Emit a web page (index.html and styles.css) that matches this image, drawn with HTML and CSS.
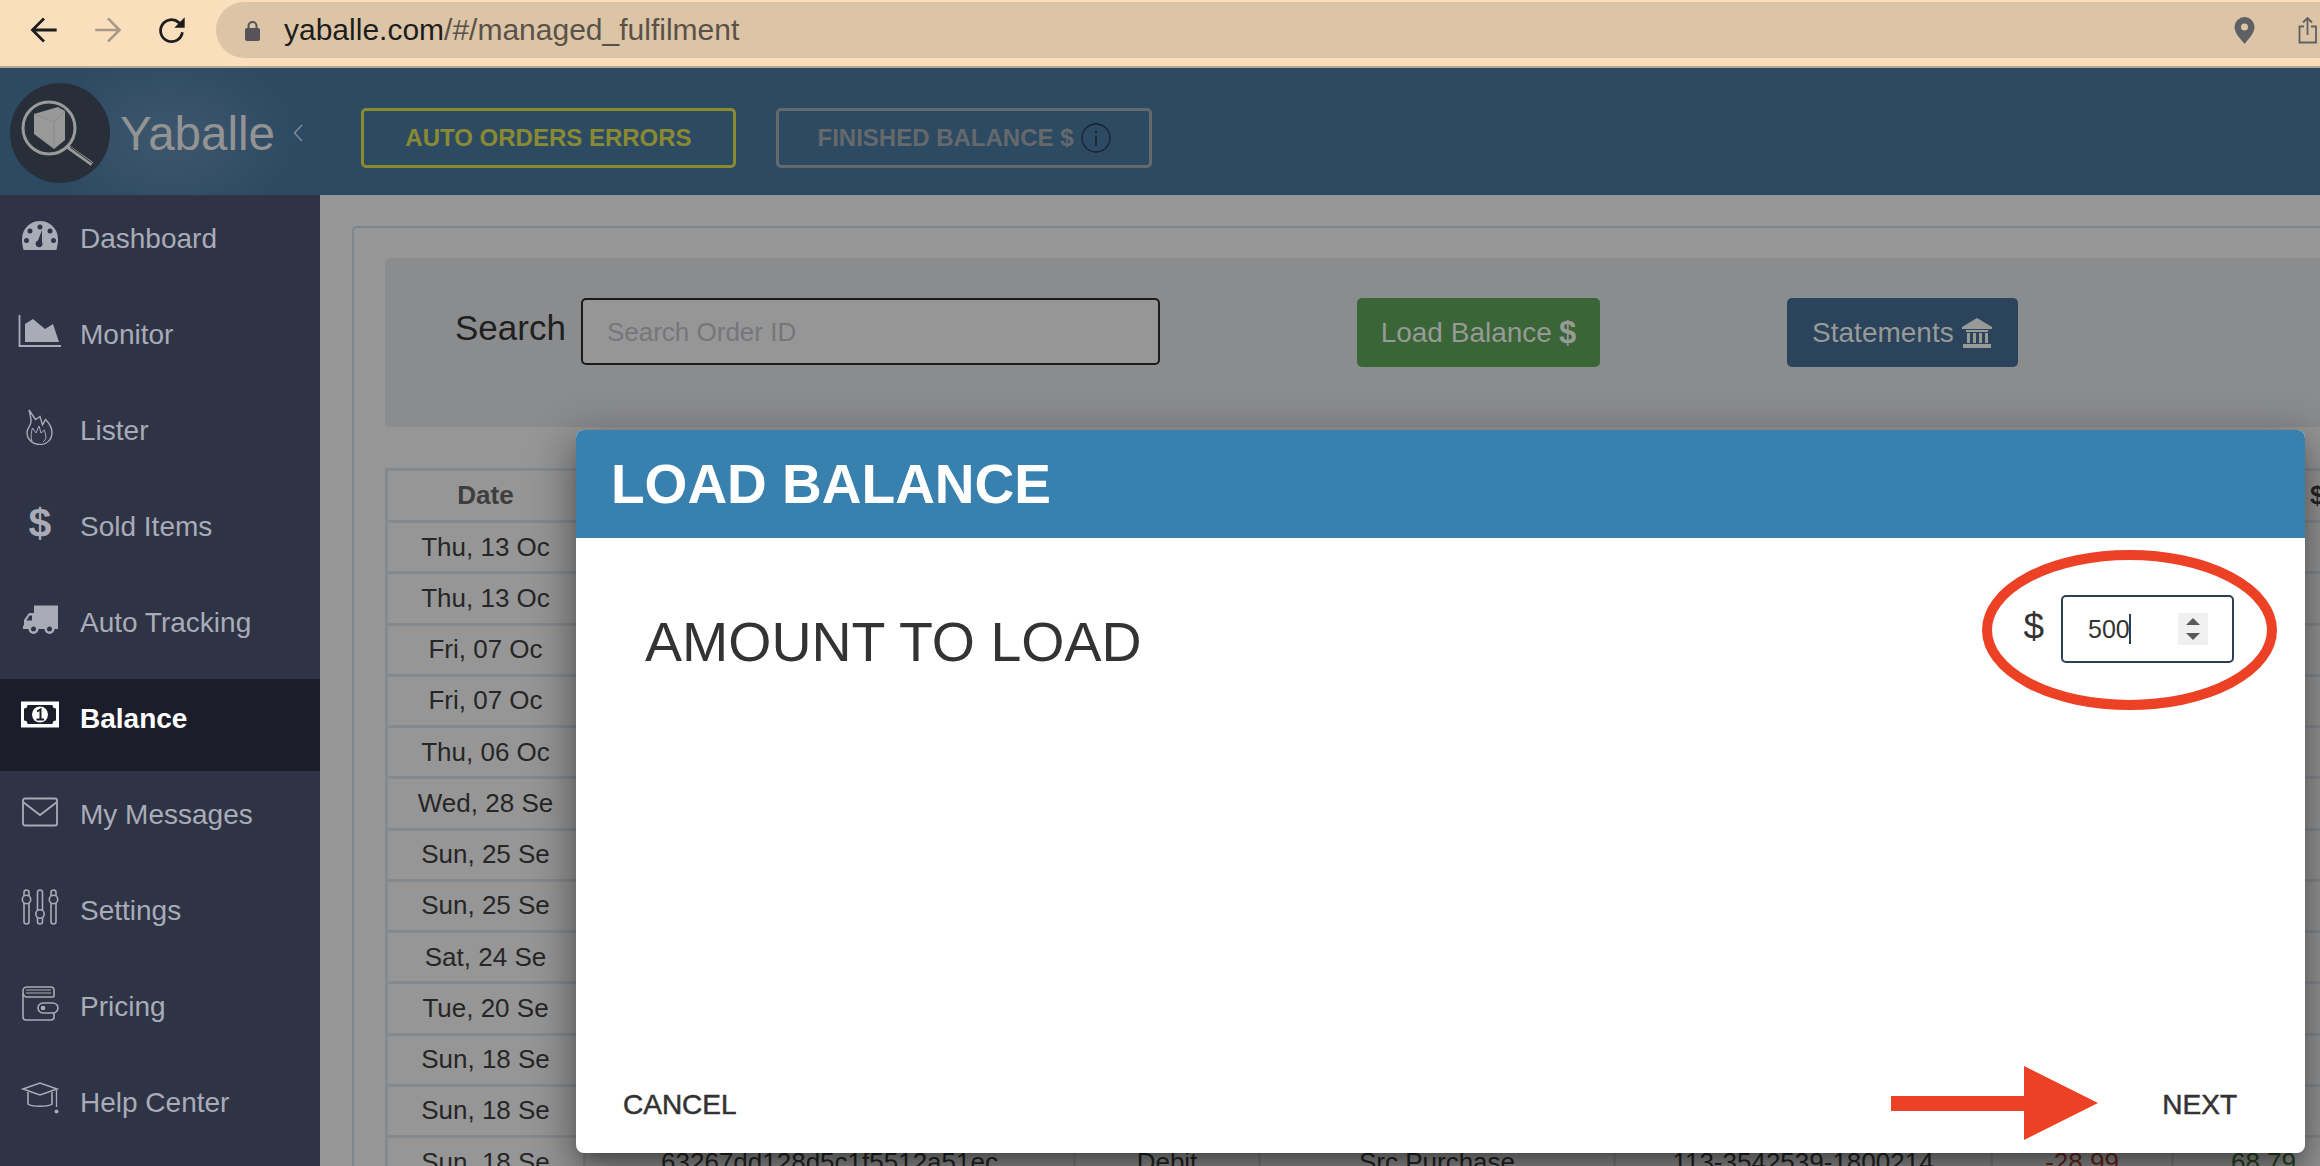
FILE: index.html
```html
<!DOCTYPE html>
<html lang="en">
<head>
<meta charset="utf-8">
<title>Yaballe</title>
<link rel="stylesheet" href="styles.css">
</head>
<body>
<div class="browser">
  <div class="nav-group">
    <svg class="nav-icon" viewBox="0 0 26 26"><path d="M24 13H4M13 3L3 13l10 10" fill="none" stroke="#1d1d1d" stroke-width="2.400"/></svg>
    <svg class="nav-icon" viewBox="0 0 26 26"><path d="M2 13h20M13 3l10 10-10 10" fill="none" stroke="#a8998a" stroke-width="2.200"/></svg>
    <svg class="nav-icon" viewBox="0 0 26 26"><path d="M22 15a9.500 9.500 0 1 1-3-8.400L22 9.500" fill="none" stroke="#1d1d1d" stroke-width="2.400"/><path d="M24 2v9h-9z" fill="#1d1d1d"/></svg>
  </div>
  <div class="address">
    <svg class="lock" viewBox="0 0 17 21"><path d="M4.500 9V6a4 4 0 0 1 8 0v3" fill="none" stroke="#55525a" stroke-width="2"/><rect x="1" y="8" width="15" height="13" rx="2" fill="#55525a"/></svg>
    <span class="url"><span class="url-host">yaballe.com</span>/#/managed_fulfilment</span>
    <svg class="pin" viewBox="0 0 21 27"><path fill-rule="evenodd" d="M10.500 0a10 10 0 0 1 10 10c0 6-6 12-10 17C6.500 22 .5 16 .5 10a10 10 0 0 1 10-10zm0 6.500a3.500 3.500 0 1 0 0 7 3.500 3.500 0 0 0 0-7z" fill="#5f6064"/></svg>
    <svg class="share" viewBox="0 0 21 27"><path d="M10.500 18V1M6 5.500L10.500 1 15 5.500M7 9.500H2.500v16h16.500v-16H14" fill="none" stroke="#5f6064" stroke-width="1.800"/></svg>
  </div>
</div>
<header class="topbar">
  <div class="brand">
    <svg class="logo" viewBox="0 0 100 100"><circle cx="50" cy="50" r="50" fill="#282f39"/><path d="M24 31l24-7 7 4v29l-11 9-20-15z" fill="#999"/><path d="M24 31l20 8 11-11M44 39v27" fill="none" stroke="#8a8a8a" stroke-width="1"/><circle cx="39" cy="45" r="26" fill="none" stroke="#9b9b9b" stroke-width="3"/><path d="M58 64l24 17" stroke="#9b9b9b" stroke-width="4"/><path d="M60 64l22 16" stroke="#282f39" stroke-width="1"/></svg>
    <span class="brand-name">Yaballe</span>
    <svg class="chev" viewBox="0 0 10 18"><path d="M9 1L1.500 9 9 17" fill="none" stroke="#7d8a96" stroke-width="1.600"/></svg>
  </div>
  <button class="top-btn top-btn-warn">AUTO ORDERS ERRORS</button>
  <button class="top-btn top-btn-muted">FINISHED BALANCE $ <svg class="info" viewBox="0 0 30 30"><circle cx="15" cy="15" r="14" fill="none" stroke="#16212c" stroke-width="1.300"/><path d="M15 12.500V23M15 7.500v2.500" stroke="#16212c" stroke-width="1.500"/></svg></button>
</header>
<div class="workspace">
  <nav class="sidebar">
    <a class="nav-item"><svg class="ni" viewBox="0 0 44 36"><path fill-rule="evenodd" d="M22 4a18 18 0 0 1 18 18c0 4-.7 8-1.500 11h-33C4.700 30 4 26 4 22A18 18 0 0 1 22 4zm0 3.500a2.500 2.500 0 1 0 0 5 2.500 2.500 0 0 0 0-5zM12 11.500a2.500 2.500 0 1 0 0 5 2.500 2.500 0 0 0 0-5zm20 0a2.500 2.500 0 1 0 0 5 2.500 2.500 0 0 0 0-5zM8.500 21a2.500 2.500 0 1 0 0 5 2.500 2.500 0 0 0 0-5zm27 0a2.500 2.500 0 1 0 0 5 2.500 2.500 0 0 0 0-5zM24 13l-4 10.500a3.500 3.500 0 1 0 3.800 5.500c1-1 1-2.500.2-3.500z" fill="currentColor"/></svg><span>Dashboard</span></a>
    <a class="nav-item"><svg class="ni" viewBox="0 0 44 36"><path d="M1.500 2v31H43" fill="none" stroke="currentColor" stroke-width="1.800"/><path d="M7 29V11l8-5 12 10 8-5 6 18z" fill="currentColor"/></svg><span>Monitor</span></a>
    <a class="nav-item"><svg class="ni" viewBox="0 0 44 36"><path d="M11 1l6.500 9.500L22 7.500l2.500 8.500 3-5.500c4 4 6.500 8.500 6.500 13 0 7-5 12-12 12S9 30.500 9 23.500c0-4 3.500-6.500 4-10.500.3-3.500-1-8-2-12z" fill="none" stroke="currentColor" stroke-width="1.400"/><path d="M14 32c-1.500-3.500-1-9 .5-13l3.500 5 3-7 2 7 3.500-3 1.500 7c0 2-1.500 4-3 5" fill="none" stroke="currentColor" stroke-width="1"/></svg><span>Lister</span></a>
    <a class="nav-item"><span class="ni ni-dollar">$</span><span>Sold Items</span></a>
    <a class="nav-item"><svg class="ni" viewBox="0 0 44 36"><path fill-rule="evenodd" d="M16 4.500h24V28h-3.500a5 5 0 0 1-10 0h-6a5 5 0 0 1-10 0H5v-3l1-1v-5l5-7h5zM14 14.500h-2.500l-3 5H14zM15.500 25.500a2.500 2.500 0 1 0 0 5 2.500 2.500 0 0 0 0-5zm16 0a2.500 2.500 0 1 0 0 5 2.500 2.500 0 0 0 0-5z" fill="currentColor"/></svg><span>Auto Tracking</span></a>
    <a class="nav-item active"><svg class="ni" viewBox="0 0 44 36"><path fill-rule="evenodd" d="M3 4.500h38v26H3zM9.500 8c0 2.500-1.500 3.500-3.500 3.500v12c2 0 3.500 1 3.500 3.500h25c0-2.500 1.500-3.500 3.500-3.500v-12c-2 0-3.500-1-3.500-3.500z" fill="currentColor"/><circle cx="22" cy="17.500" r="8" fill="currentColor"/><path d="M19 14.500l3.500-2v10M18.500 22.500h7.500" fill="none" stroke="#1b1d2a" stroke-width="2"/></svg><span>Balance</span></a>
    <a class="nav-item"><svg class="ni" viewBox="0 0 44 36"><rect x="5" y="5.500" width="34" height="27" rx="2" fill="none" stroke="currentColor" stroke-width="1.800"/><path d="M5 9l17 13L39 9" fill="none" stroke="currentColor" stroke-width="1.800"/></svg><span>My Messages</span></a>
    <a class="nav-item"><svg class="ni" viewBox="0 0 44 36" fill="none" stroke="currentColor" stroke-width="1.600"><rect x="6" y="1" width="5" height="34" rx="2.500"/><rect x="19.500" y="1" width="5" height="34" rx="2.500"/><rect x="33" y="1" width="5" height="34" rx="2.500"/><circle cx="8.500" cy="10.500" r="4.200" fill="#2e3346"/><circle cx="22" cy="25" r="4.200" fill="#2e3346"/><circle cx="35.500" cy="10.500" r="4.200" fill="#2e3346"/></svg><span>Settings</span></a>
    <a class="nav-item"><svg class="ni" viewBox="0 0 44 36" fill="none" stroke="currentColor" stroke-width="1.600"><path d="M5 6a4 4 0 0 1 4-4h24a3 3 0 0 1 3 3v7M5 6v26a3 3 0 0 0 3 3h25a3 3 0 0 0 3-3v-4M5 7c0 3 2 5 4 5h27"/><path d="M8 5h25M8 8h25" stroke-width="1"/><rect x="20" y="18" width="20" height="10" rx="5"/><circle cx="25" cy="23" r="1.500" fill="currentColor"/></svg><span>Pricing</span></a>
    <a class="nav-item"><svg class="ni" viewBox="0 0 44 36" fill="none" stroke="currentColor" stroke-width="1.600"><path d="M5 8l17-6 17 6-17 6z"/><path d="M10 11v12c3 3 21 3 24 0V11"/><path d="M38.500 9v17" stroke-width="1.300"/><circle cx="38.500" cy="30.500" r="2" fill="currentColor" stroke="none"/></svg><span>Help Center</span></a>
  </nav>
  <main class="content">
    <section class="panel">
      <div class="search-band">
        <label class="search-label">Search</label>
        <div class="search-input">Search Order ID</div>
        <button class="action action-green">Load Balance <b class="action-sign">$</b></button>
        <button class="action action-blue">Statements <svg class="bank" viewBox="0 0 32 30"><path d="M16 0l15 9v2H1V9z" fill="currentColor"/><path d="M2 26h28v4H2zM5 12h22v2H5zM6 15h3v10H6zM12 15h3v10h-3zM18 15h3v10h-3zM24 15h3v10h-3z" fill="currentColor"/></svg></button>
      </div>
      <table class="orders">
        <thead><tr><th class="c-date">Date</th><th class="c-id"></th><th class="c-type"></th><th class="c-desc"></th><th class="c-order"></th><th class="c-amt"></th><th class="c-bal">$</th></tr></thead>
        <tbody>
          <tr><td>Thu, 13 Oc</td><td></td><td></td><td></td><td></td><td></td><td></td></tr>
          <tr><td>Thu, 13 Oc</td><td></td><td></td><td></td><td></td><td></td><td></td></tr>
          <tr><td>Fri, 07 Oc</td><td></td><td></td><td></td><td></td><td></td><td></td></tr>
          <tr><td>Fri, 07 Oc</td><td></td><td></td><td></td><td></td><td></td><td></td></tr>
          <tr><td>Thu, 06 Oc</td><td></td><td></td><td></td><td></td><td></td><td></td></tr>
          <tr><td>Wed, 28 Se</td><td></td><td></td><td></td><td></td><td></td><td></td></tr>
          <tr><td>Sun, 25 Se</td><td></td><td></td><td></td><td></td><td></td><td></td></tr>
          <tr><td>Sun, 25 Se</td><td></td><td></td><td></td><td></td><td></td><td></td></tr>
          <tr><td>Sat, 24 Se</td><td></td><td></td><td></td><td></td><td></td><td></td></tr>
          <tr><td>Tue, 20 Se</td><td></td><td></td><td></td><td></td><td></td><td></td></tr>
          <tr><td>Sun, 18 Se</td><td></td><td></td><td></td><td></td><td></td><td></td></tr>
          <tr><td>Sun, 18 Se</td><td></td><td></td><td></td><td></td><td></td><td></td></tr>
          <tr><td>Sun, 18 Se</td><td>63267dd128d5c1f5512a51ec</td><td>Debit</td><td>Src Purchase</td><td>113-3542539-1800214</td><td class="neg">-28.99</td><td class="pos">68.79</td></tr>
        </tbody>
      </table>
    </section>
  </main>
</div>
<div class="modal">
  <div class="modal-head">LOAD BALANCE</div>
  <div class="modal-body">
    <h2 class="amount-title">AMOUNT TO LOAD</h2>
    <div class="amount-field">
      <span class="amount-sign">$</span>
      <div class="amount-input"><span class="amount-value">500</span><span class="spinner"><i class="spin-up"></i><i class="spin-down"></i></span></div>
    </div>
  </div>
  <div class="modal-foot"><button class="foot-btn">CANCEL</button><button class="foot-btn">NEXT</button></div>
</div>
<svg class="annotation" viewBox="0 0 2320 1166">
  <ellipse cx="2129.500" cy="630" rx="142.500" ry="75" fill="none" stroke="#ec4125" stroke-width="10"/>
  <rect x="1891" y="1096" width="134" height="15" fill="#ec4125"/>
  <path d="M2024 1066l74 37-74 37z" fill="#ec4125"/>
</svg>
</body>
</html>
```

FILE: styles.css
```css
* { box-sizing: border-box; }
html, body { margin: 0; height: 1166px; overflow: hidden; }
body { position: relative; width: 2320px; background: #969696; font-family: "Liberation Sans", Arial, sans-serif; color: #333; }
button { font-family: inherit; }

.browser { height: 68px; background: #fbdfbc; border-bottom: 2px solid #b8a68e; display: flex; align-items: center; padding: 0 0 6px 29px; }
.nav-group { display: flex; gap: 34px; flex: none; }
.nav-icon { width: 30px; height: 30px; flex: none; }
.address { flex: 1; height: 56px; margin-left: 29px; background: #dcc5a6; border-radius: 28px 0 0 28px; display: flex; align-items: center; padding: 0 2px 0 28px; }
.lock { width: 17px; height: 21px; flex: none; }
.url { font-size: 30px; color: #5a5148; margin-left: 23px; flex: 1; }
.url-host { color: #1d1d1d; }
.pin { width: 21px; height: 27px; flex: none; margin-right: 42px; }
.share { width: 21px; height: 27px; flex: none; }

.topbar { height: 127px; background: #2d4a63; display: flex; align-items: center; }
.brand { width: 361px; height: 127px; display: flex; align-items: center; padding: 3px 0 0 10px; background: radial-gradient(ellipse 130px 90px at 170px 70px, #3d566d, #2d4a63); flex: none; }
.logo { width: 100px; height: 100px; flex: none; }
.brand-name { font-size: 47.500px; color: #939393; margin-left: 10px; }
.chev { width: 10px; height: 18px; margin-left: 18px; }
.top-btn { height: 60px; margin-top: 13px; border-radius: 5px; background: transparent; font-size: 24px; font-weight: 700; padding: 0; display: flex; align-items: center; justify-content: center; gap: 7px; }
.top-btn-warn { width: 375px; border: 3px solid #8a8a33; color: #8a8a33; }
.top-btn-muted { width: 376px; margin-left: 40px; border: 3px solid #66696b; color: #66696b; }
.info { width: 30px; height: 30px; }

.workspace { height: 971px; display: flex; }
.sidebar { width: 320px; background: #2e3346; flex: none; display: flex; flex-direction: column; }
.nav-item { height: 96px; display: flex; align-items: center; padding: 0 0 8px 18px; color: #a9acb6; font-size: 28px; gap: 18px; }
.nav-item.active { background: #1b1d2a; color: #fff; font-weight: 700; height: 92px; margin-top: 4px; padding-bottom: 12px; }
.ni { width: 44px; height: 36px; flex: none; margin-top: -9px; }
.ni-dollar { font-size: 41px; font-weight: 700; text-align: center; line-height: 36px; }

.content { flex: 1; min-width: 0; padding: 31px 0 0 32px; overflow: hidden; }
.panel { width: 100%; height: 1000px; border: 2px solid #7e858c; border-right: 0; border-bottom: 0; border-radius: 5px 0 0 0; padding: 30px 0 0 31px; }
.search-band { height: 169px; background: #8b8c8e; border-radius: 5px 0 0 5px; display: flex; align-items: flex-start; padding: 40px 0 0 70px; }
.search-label { font-size: 35px; color: #1f1f1f; line-height: 60px; }
.search-input { width: 579px; height: 67px; margin-left: 15px; background: #969696; border: 2px solid #1b1b1b; border-radius: 5px; padding-left: 24px; font-size: 26px; line-height: 65px; color: #75777b; }
.action { height: 69px; border: 0; border-radius: 5px; font-size: 28px; color: #979a97; display: flex; align-items: center; justify-content: center; gap: 7px; padding: 0; }
.action-green { width: 243px; margin-left: 197px; background: #3a6537; }
.action-blue { width: 231px; margin-left: 187px; background: #2c435c; }
.action-sign { font-size: 31px; }
.bank { width: 32px; height: 30px; }

.orders { margin-top: 41px; border-collapse: collapse; table-layout: fixed; width: 1968px; }
.orders th, .orders td { border: 3px solid #858a8e; text-align: center; font-size: 26px; padding: 0; height: 51.250px; color: #262626; white-space: nowrap; overflow: hidden; }
.orders th { font-weight: 700; color: #3e3e3e; height: 52px; }
.c-date { width: 198px; }
.c-id { width: 490px; }
.c-type { width: 185px; }
.c-desc { width: 355px; }
.c-order { width: 377px; }
.c-amt { width: 181px; }
.c-bal { width: 182px; }
.orders th.c-bal { text-align: left; padding-left: 136px; color: #262626; }
.orders td.neg { color: #6e2a22; }
.orders td.pos { color: #27471f; }

.modal { position: absolute; left: 576px; top: 430px; width: 1729px; height: 723px; background: #fff; border-radius: 8px; box-shadow: 0 11px 15px -7px rgba(0,0,0,.3), 0 24px 38px 3px rgba(0,0,0,.22), 0 9px 46px 8px rgba(0,0,0,.2); display: flex; flex-direction: column; overflow: hidden; }
.modal-head { height: 108px; background: #3880ae; color: #fff; font-size: 55px; font-weight: 700; line-height: 108px; padding-left: 35px; flex: none; }
.modal-body { flex: 1; display: flex; justify-content: space-between; align-items: flex-start; padding: 57px 71px 0 69px; }
.amount-title { margin: 15px 0 0; font-size: 55.500px; font-weight: 400; line-height: 64px; color: #333; }
.amount-field { display: flex; align-items: center; gap: 17px; }
.amount-sign { font-size: 37px; color: #333; margin-bottom: 4px; }
.amount-input { width: 173px; height: 68px; border: 2px solid #2d3f55; border-radius: 5px; display: flex; align-items: center; padding-left: 25px; font-size: 25px; color: #333; }
.amount-value { border-right: 2px solid #2d3f55; line-height: 30px; width: 43px; }
.spinner { margin-left: 47px; width: 30px; height: 32px; background: #f0f0f0; display: flex; flex-direction: column; align-items: center; justify-content: center; gap: 8px; }
.spin-up { width: 0; height: 0; border: 7.500px solid transparent; border-top: 0; border-bottom: 7px solid #5a5a5a; }
.spin-down { width: 0; height: 0; border: 7.500px solid transparent; border-bottom: 0; border-top: 7px solid #5a5a5a; }
.modal-foot { height: 100px; flex: none; display: flex; justify-content: space-between; align-items: flex-start; padding: 35px 68px 0 47px; }
.foot-btn { border: 0; background: none; font-size: 28px; color: #333; padding: 0; line-height: 34px; -webkit-text-stroke: .5px #333; }

.annotation { position: absolute; left: 0; top: 0; width: 2320px; height: 1166px; pointer-events: none; }
```
